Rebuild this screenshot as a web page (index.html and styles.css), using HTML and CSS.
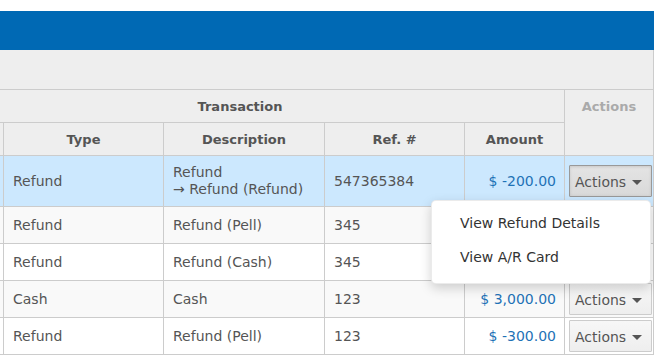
FILE: index.html
```html
<!DOCTYPE html>
<html lang="en">
<head>
  <meta charset="UTF-8">
  <meta name="viewport" content="width=device-width, initial-scale=1.0">
  <title>Transactions</title>
  <link rel="stylesheet" href="styles.css">
</head>
<body>
  <div class="panel">
    <div class="panel-heading"></div>
    <div class="toolbar"></div>

    <div class="table-scroll">
      <table class="ledger">
        <colgroup>
          <col class="col-date">
          <col class="col-type">
          <col class="col-desc">
          <col class="col-ref">
          <col class="col-amount">
          <col class="col-actions">
        </colgroup>
        <thead>
          <tr>
            <th colspan="5">Transaction</th>
            <th rowspan="2" class="muted">Actions</th>
          </tr>
          <tr>
            <th></th>
            <th>Type</th>
            <th>Description</th>
            <th>Ref. #</th>
            <th>Amount</th>
          </tr>
        </thead>
        <tbody>
          <tr class="active">
            <td></td>
            <td>Refund</td>
            <td>Refund<br>&rarr; Refund (Refund)</td>
            <td>547365384</td>
            <td class="amount">$ -200.00</td>
            <td class="action-cell">
              <div class="dropdown">
                <button class="btn-actions pressed">Actions <span class="caret"></span></button>
                <ul class="menu">
                  <li>View Refund Details</li>
                  <li>View A/R Card</li>
                </ul>
              </div>
            </td>
          </tr>
          <tr>
            <td></td>
            <td>Refund</td>
            <td>Refund (Pell)</td>
            <td>345</td>
            <td class="amount"></td>
            <td class="action-cell"></td>
          </tr>
          <tr>
            <td></td>
            <td>Refund</td>
            <td>Refund (Cash)</td>
            <td>345</td>
            <td class="amount"></td>
            <td class="action-cell"></td>
          </tr>
          <tr>
            <td></td>
            <td>Cash</td>
            <td>Cash</td>
            <td>123</td>
            <td class="amount">$ 3,000.00</td>
            <td class="action-cell"><button class="btn-actions">Actions <span class="caret"></span></button></td>
          </tr>
          <tr>
            <td></td>
            <td>Refund</td>
            <td>Refund (Pell)</td>
            <td>123</td>
            <td class="amount">$ -300.00</td>
            <td class="action-cell"><button class="btn-actions">Actions <span class="caret"></span></button></td>
          </tr>
        </tbody>
      </table>
    </div>
  </div>
</body>
</html>
```

FILE: styles.css
```css
html {
  overflow: hidden;
}

body {
  margin: 0;
  padding-top: 11px;
  background: #fff;
  font-family: "DejaVu Sans", Verdana, sans-serif;
  font-size: 14px;
  color: #555;
}

.panel {
  width: 654px;
}

.panel-heading {
  height: 39px;
  background-color: #0069b4;
}

.toolbar {
  height: 39px;
  background-color: #eee;
  border-right: 1px solid #ccc;
}

.table-scroll {
  overflow: hidden;
}

.ledger {
  border-collapse: collapse;
  table-layout: fixed;
  width: 739px;
  margin-left: -85px;
}

.col-date { width: 88px; }
.col-type { width: 160px; }
.col-desc { width: 161px; }
.col-ref { width: 140px; }
.col-amount { width: 100px; }
.col-actions { width: 89px; }

.ledger th,
.ledger td {
  border: 1px solid #ccc;
  text-align: left;
}

.ledger th {
  background-color: #eee;
  font-size: 13px;
  font-weight: bold;
  line-height: 16px;
  padding: 9px 8px 7px;
  text-align: center;
  vertical-align: top;
}

.ledger th.muted {
  color: #aaa;
}

.ledger td {
  height: 20px;
  line-height: 17px;
  padding: 8px 8px 8px 9px;
  white-space: nowrap;
}

.ledger tbody tr:nth-child(even) td {
  background-color: #f9f9f9;
}

.ledger tbody tr.active td {
  background-color: #cce8fe;
}

.ledger td.amount {
  text-align: right;
  color: #1f72b6;
}

.ledger td.action-cell {
  padding: 2px 1px 2px 4px;
}

.dropdown {
  position: relative;
}

.btn-actions {
  display: block;
  width: 83px;
  height: 32px;
  padding: 1px 0 0 5px;
  border: 1px solid #ccc;
  border-radius: 1px;
  background: linear-gradient(#f7f7f7, #eeeeee);
  font-family: "DejaVu Sans", Verdana, sans-serif;
  font-size: 14px;
  color: #555;
  text-align: left;
  white-space: nowrap;
}

.btn-actions.pressed {
  border-color: #999;
  background: linear-gradient(#e4e4e4, #d9d9d9);
  box-shadow: inset 0 1px 3px rgba(0, 0, 0, 0.12);
}

.caret {
  display: inline-block;
  width: 0;
  height: 0;
  margin-left: 1px;
  vertical-align: middle;
  border-top: 5px solid #555;
  border-left: 5px solid transparent;
  border-right: 5px solid transparent;
}

.menu {
  position: absolute;
  right: 1px;
  top: 35px;
  width: 218px;
  margin: 0;
  padding: 5px 0 9px;
  list-style: none;
  background: #fff;
  border: 1px solid rgba(0, 0, 0, 0.08);
  border-radius: 5px;
  box-shadow: 0 4px 12px rgba(0, 0, 0, 0.18);
  color: #333;
  z-index: 10;
}

.menu li {
  padding: 8px 10px 8px 28px;
  line-height: 18px;
}
```
